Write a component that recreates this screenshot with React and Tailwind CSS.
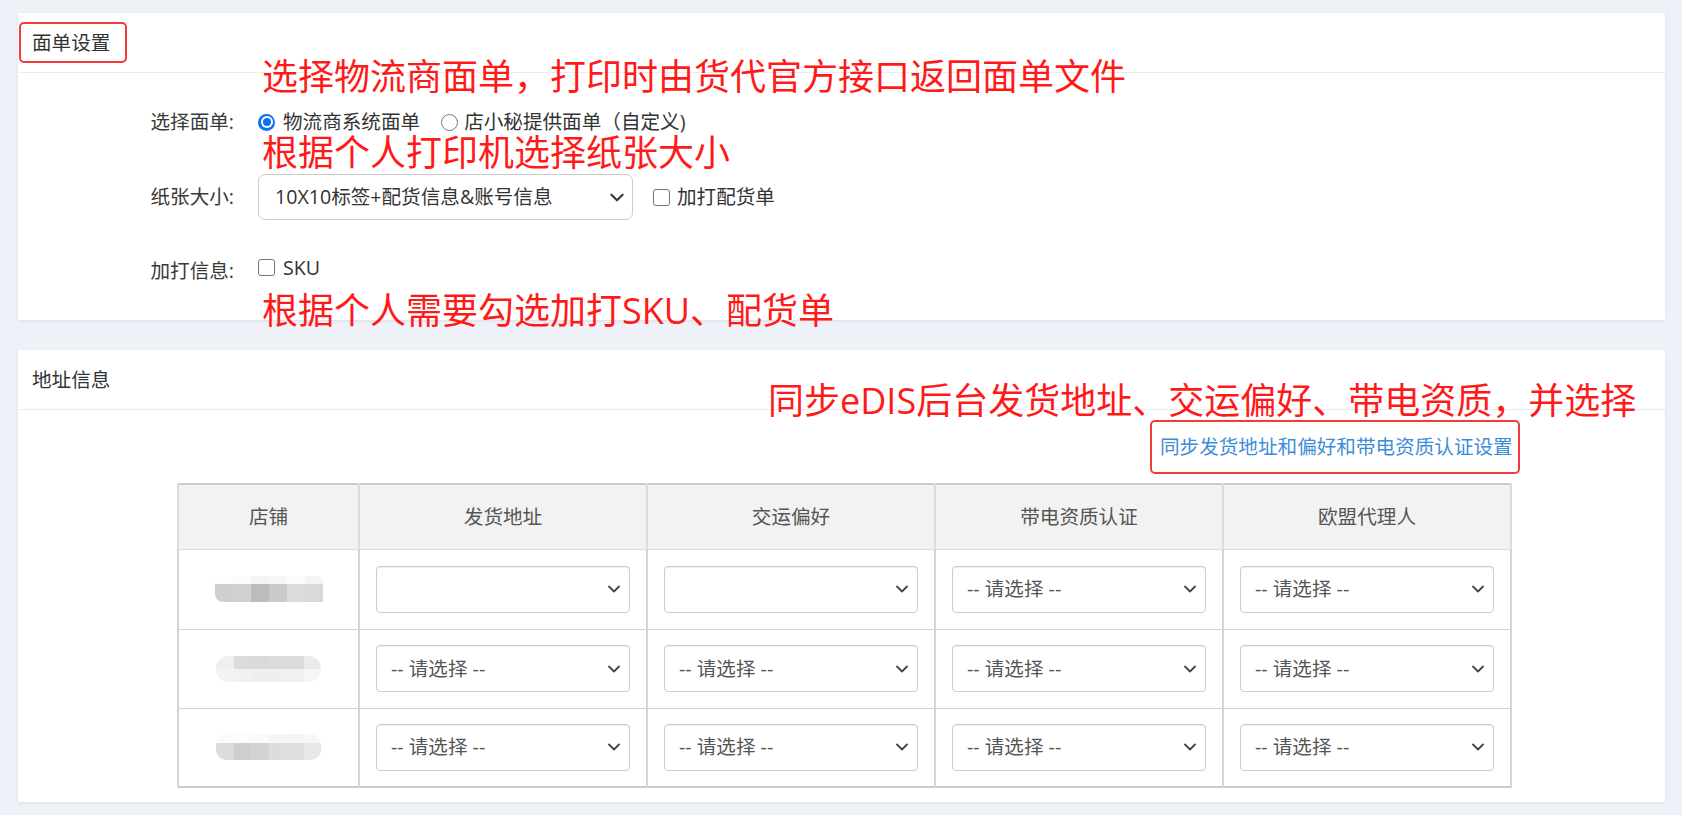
import React from 'react'

const RED = 'text-[#ff1a1a]'

const BLOBS = [
  {
    w: 'w-[108px]',
    shape: 'rounded-bl-[8px] rounded-tr-[6px]',
    top: ['#fdfdfd', '#fbfbfb', '#f3f4f4', '#f6f6f6', '#fbfbfb', '#f4f5f5'],
    bottom: ['#cfcfcf', '#d0d0d0', '#bbbcbd', '#c9c9c9', '#dddbd9', '#d7d9db'],
    th: 'h-[8px]',
    bh: 'h-[18px]'
  },
  {
    w: 'w-[105px]',
    shape: 'rounded-full',
    top: ['#efeff0', '#dadbdc', '#d9dadb', '#dcdcdc', '#dcdcdc', '#eaebed'],
    bottom: ['#f3f3f3', '#f1f1f1', '#eeeff0', '#efefef', '#f1f1f1', '#f6f6f6'],
    th: 'h-[13px]',
    bh: 'h-[13px]'
  },
  {
    w: 'w-[105px]',
    shape: 'rounded-[10px]',
    top: ['#fcfbfa', '#fbfcfc', '#fafafa', '#f6f6f7', '#f5f5f6', '#f7f7f8'],
    bottom: ['#dddcdb', '#cccecf', '#d2d4d4', '#dcdde0', '#dedfe0', '#e6e7e9'],
    th: 'h-[9px]',
    bh: 'h-[17px]'
  }
]

const ROWS = [
  { blob: 0, values: ['', '', '-- 请选择 --', '-- 请选择 --'] },
  { blob: 1, values: ['-- 请选择 --', '-- 请选择 --', '-- 请选择 --', '-- 请选择 --'] },
  { blob: 2, values: ['-- 请选择 --', '-- 请选择 --', '-- 请选择 --', '-- 请选择 --'] }
]

const COLUMNS = ['店铺', '发货地址', '交运偏好', '带电资质认证', '欧盟代理人']

export default function App() {
  return (
    <div className="min-h-[815px] bg-[#eef1f8] pb-[13px] pl-[18px] pr-[17px] pt-[13px] font-['Open_Sans','Noto_Sans_CJK_SC',sans-serif] text-[19.6px] text-[#333]">
      <WaybillCard />
      <AddressCard />
    </div>
  )
}

function WaybillCard() {
  return (
    <div className="relative h-[307px] bg-white shadow-[0_1px_3px_rgba(60,70,100,0.10)]">
      <div className="flex h-[60px] items-center border-b border-[#ececec] pl-[1px]">
        <span className="flex h-[41px] w-[108px] items-center rounded-[5px] border-2 border-[#f23a3a] pl-[11px] leading-none">
          面单设置
        </span>
      </div>

      <div className="mt-[32px] flex h-[34px] items-center">
        <Label>选择面单:</Label>
        <div className="flex items-center">
          <Radio checked />
          <span className="ml-[8px] leading-none">物流商系统面单</span>
        </div>
        <div className="ml-[21px] flex items-center">
          <Radio />
          <span className="ml-[6px] leading-none">店小秘提供面单（自定义)</span>
        </div>
      </div>

      <div className="mt-[35px] flex h-[46px] items-center">
        <Label>纸张大小:</Label>
        <div className="flex h-[46px] w-[375px] items-center justify-between rounded-[7px] border border-[#cbcbcb] pl-[16px] pr-[8px]">
          <span className="leading-none">10X10标签+配货信息&amp;账号信息</span>
          <Chevron className="h-[9px] w-[14px] text-[#333]" />
        </div>
        <div className="ml-[20px] flex items-center">
          <Checkbox />
          <span className="ml-[7px] leading-none">加打配货单</span>
        </div>
      </div>

      <div className="mt-[34px] flex h-[34px] items-center">
        <Label>加打信息:</Label>
        <div className="mb-[7px] flex items-center">
          <Checkbox />
          <span className="ml-[8px] leading-none">SKU</span>
        </div>
      </div>

      <Note className="left-[244px] top-[46px]">
        选择物流商面单，打印时由货代官方接口返回面单文件
      </Note>
      <Note className="left-[244px] top-[122px]">根据个人打印机选择纸张大小</Note>
      <Note className="left-[244px] top-[280px]">根据个人需要勾选加打SKU、配货单</Note>
    </div>
  )
}

function AddressCard() {
  return (
    <div className="relative mt-[30px] h-[452px] bg-white shadow-[0_1px_3px_rgba(60,70,100,0.10)]">
      <div className="flex h-[60px] items-center border-b border-[#ececec] pl-[14px] leading-none">
        地址信息
      </div>

      <div className="ml-[159px] w-[1333px]">
        <div className="mt-[10px] flex justify-end">
          <button className="-mr-[10px] flex h-[54px] w-[370px] items-center rounded-[5px] border-2 border-[#f23a3a] pl-[8px] leading-none text-[#3d8dd6]">
            同步发货地址和偏好和带电资质认证设置
          </button>
        </div>

        <table className="mt-[9px] w-full table-fixed border-collapse border-2 border-[#cbcbcb] text-[#555]">
          <colgroup>
            <col className="w-[181px]" />
            <col className="w-[288px]" />
            <col className="w-[288px]" />
            <col className="w-[288px]" />
            <col className="w-[288px]" />
          </colgroup>
          <thead>
            <tr className="h-[65px] bg-[#f2f2f2]">
              {COLUMNS.map((c) => (
                <th
                  key={c}
                  className="border-x-2 border-y border-[#dcdcdc] p-0 text-center font-normal leading-none"
                >
                  {c}
                </th>
              ))}
            </tr>
          </thead>
          <tbody>
            {ROWS.map((r, i) => (
              <tr key={i} className={i === 0 ? 'h-[80px]' : 'h-[79px]'}>
                <td className="border-x-2 border-y border-[#d4d4d4] p-0">
                  <div className="flex justify-center">
                    <Blob {...BLOBS[r.blob]} />
                  </div>
                </td>
                {r.values.map((v, j) => (
                  <td
                    key={j}
                    className="border-x-2 border-y border-[#d4d4d4] px-[16px] py-0 align-middle"
                  >
                    <Select value={v} />
                  </td>
                ))}
              </tr>
            ))}
          </tbody>
        </table>
      </div>

      <Note className="left-[750px] top-[33px]">
        同步eDIS后台发货地址、交运偏好、带电资质，并选择
      </Note>
    </div>
  )
}

function Label({ children }) {
  return (
    <div className="mr-[24px] w-[216px] shrink-0 text-right leading-none text-[#3a3a3a]">
      {children}
    </div>
  )
}

function Radio({ checked = false }) {
  if (checked) {
    return (
      <span className="flex h-[17px] w-[17px] shrink-0 items-center justify-center rounded-full bg-[#0b72f5]">
        <span className="flex h-[12px] w-[12px] items-center justify-center rounded-full bg-white">
          <span className="h-[8px] w-[8px] rounded-full bg-[#0b72f5]" />
        </span>
      </span>
    )
  }
  return (
    <span className="h-[17px] w-[17px] shrink-0 rounded-full border-[1.5px] border-[#767676] bg-white" />
  )
}

function Checkbox() {
  return (
    <span className="h-[17px] w-[17px] shrink-0 rounded-[3px] border-[1.5px] border-[#767676] bg-white" />
  )
}

function Note({ children, className = '' }) {
  return (
    <div
      className={`pointer-events-none absolute whitespace-nowrap text-[36px] leading-[36px] ${RED} ${className}`}
    >
      {children}
    </div>
  )
}

function Select({ value }) {
  return (
    <div className="flex h-[47px] items-center justify-between rounded-[4px] border border-[#cccccc] pl-[14px] pr-[9px] shadow-[inset_0_1px_1px_rgba(0,0,0,0.075)]">
      <span className="leading-none text-[#555]">{value}</span>
      <Chevron className="h-[8px] w-[12px] text-[#444]" />
    </div>
  )
}

function Chevron({ className = '' }) {
  return (
    <svg viewBox="0 0 12 8" fill="none" className={className}>
      <path
        d="M1 1.5 6 6.5 11 1.5"
        stroke="currentColor"
        strokeWidth="1.8"
        strokeLinecap="round"
        strokeLinejoin="round"
      />
    </svg>
  )
}

function Blob({ w, shape, top, bottom, th, bh }) {
  return (
    <div className={`${w} ${shape} overflow-hidden blur-[0.6px]`}>
      <div className={`flex ${th}`}>
        {top.map((c, i) => (
          <div key={i} className="flex-1" style={{ background: c }} />
        ))}
      </div>
      <div className={`flex ${bh}`}>
        {bottom.map((c, i) => (
          <div key={i} className="flex-1" style={{ background: c }} />
        ))}
      </div>
    </div>
  )
}
